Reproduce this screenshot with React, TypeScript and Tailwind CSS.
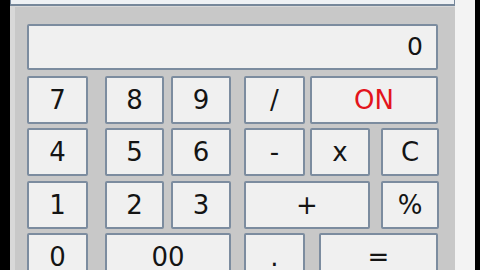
const font = "font-['DejaVu_Sans',sans-serif]";

type Key = { label: string; w: string; ml?: string; red?: boolean };

const rows: { mt: string; keys: Key[] }[] = [
  {
    mt: 'mt-[6px]',
    keys: [
      { label: '7', w: 'w-[61px]' },
      { label: '8', w: 'w-[59px]', ml: 'ml-[17px]' },
      { label: '9', w: 'w-[60px]', ml: 'ml-[7px]' },
      { label: '/', w: 'w-[61px]', ml: 'ml-[13px]' },
      { label: 'ON', w: 'w-[128px]', ml: 'ml-[5px]', red: true },
    ],
  },
  {
    mt: 'mt-[4px]',
    keys: [
      { label: '4', w: 'w-[61px]' },
      { label: '5', w: 'w-[59px]', ml: 'ml-[17px]' },
      { label: '6', w: 'w-[60px]', ml: 'ml-[7px]' },
      { label: '-', w: 'w-[61px]', ml: 'ml-[13px]' },
      { label: 'x', w: 'w-[60px]', ml: 'ml-[5px]' },
      { label: 'C', w: 'w-[58px]', ml: 'ml-[11px]' },
    ],
  },
  {
    mt: 'mt-[5px]',
    keys: [
      { label: '1', w: 'w-[61px]' },
      { label: '2', w: 'w-[59px]', ml: 'ml-[17px]' },
      { label: '3', w: 'w-[60px]', ml: 'ml-[7px]' },
      { label: '+', w: 'w-[126px]', ml: 'ml-[13px]' },
      { label: '%', w: 'w-[58px]', ml: 'ml-[11px]' },
    ],
  },
  {
    mt: 'mt-[4px]',
    keys: [
      { label: '0', w: 'w-[61px]' },
      { label: '00', w: 'w-[126px]', ml: 'ml-[17px]' },
      { label: '.', w: 'w-[61px]', ml: 'ml-[13px]' },
      { label: '=', w: 'w-[119px]', ml: 'ml-[14px]' },
    ],
  },
];

function CalcKey({ k }: { k: Key }) {
  return (
    <button
      className={`${k.w} ${k.ml ?? ''} h-[48px] shrink-0 flex items-center justify-center rounded-[2px] border-2 border-[#7c8c9f] bg-[#f0f0f0] text-[26px] leading-none ${
        k.red ? 'text-[#e3141c]' : 'text-[#141414]'
      }`}
    >
      {k.label}
    </button>
  );
}

export default function App() {
  return (
    <div className={`w-[480px] h-[270px] overflow-hidden flex bg-black ${font}`}>
      <div className="w-[10px] shrink-0 bg-black" />

      <div className="w-[445px] shrink-0 flex flex-col">
        {/* title strip of the form, mostly cut off */}
        <div className="h-[6px] shrink-0 bg-[#eef1f4] border-x border-b-2 border-[#76879a]" />

        <div className="flex-1 bg-[#c8c8c8] border-l-[5px] border-t border-[#d8d8d8] pl-[12px] pr-[17px] pt-[17px]">
          <div className="h-[46px] flex items-center justify-end pr-[13px] rounded-[2px] border-2 border-[#7c8c9f] bg-[#f0f0f0] text-[25px] text-[#141414]">
            0
          </div>

          {rows.map((row, i) => (
            <div key={i} className={`${row.mt} flex`}>
              {row.keys.map((k) => (
                <CalcKey key={k.label} k={k} />
              ))}
            </div>
          ))}
        </div>
      </div>

      <div className="w-[20px] shrink-0 bg-[#f3f3f3]" />
      <div className="flex-1 bg-black" />
    </div>
  );
}
